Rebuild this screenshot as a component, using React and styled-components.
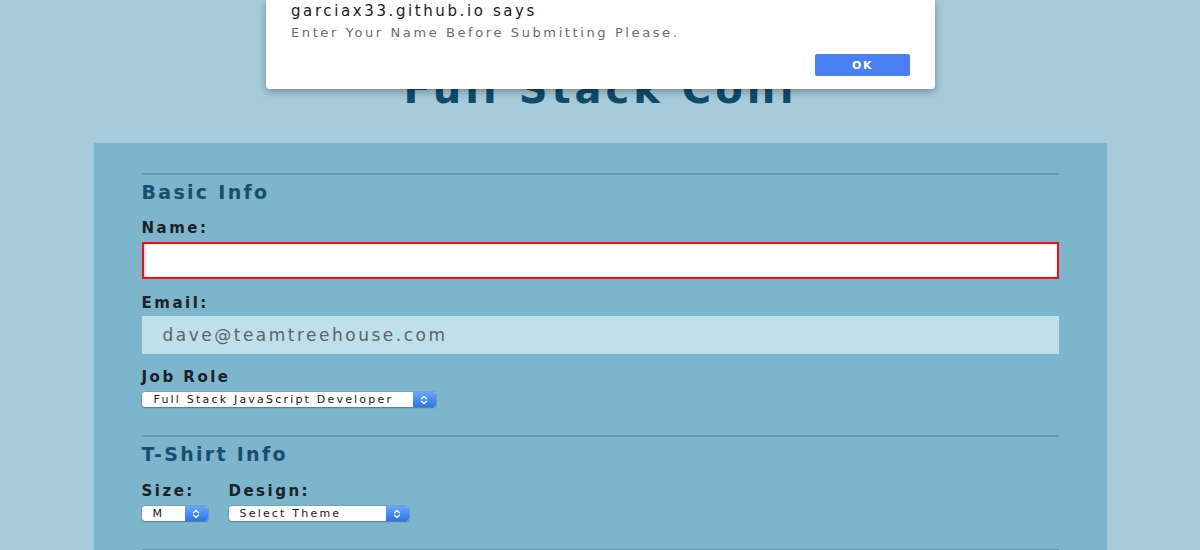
import React from "react";
import styled, { createGlobalStyle } from "styled-components";

const Global = createGlobalStyle`
  html, body { margin: 0; padding: 0; overflow: hidden; }
  body {
    background: #a7cbdb;
    font-family: "DejaVu Sans", "Liberation Sans", Arial, sans-serif;
  }
`;

const Page = styled.div`
  position: relative;
  width: 1200px;
  height: 550px;
  overflow: hidden;
`;

const Header = styled.header`
  padding-top: 65px;
  display: flex;
  justify-content: center;
`;

const Title = styled.h1`
  margin: 0;
  padding-left: 4px;
  font-size: 40px;
  line-height: 48px;
  font-weight: bold;
  letter-spacing: 4px;
  color: #0f4d6b;
`;

const Panel = styled.form`
  width: 1013px;
  margin: 30px auto 0;
  box-sizing: border-box;
  padding: 30px 48px 40px;
  background: #7cb5cc;
`;

const Section = styled.section`
  border-top: 2px solid #5e9ab4;
  padding-top: 5px;
  padding-bottom: ${(p) => p.$pb || 0}px;
  min-height: ${(p) => p.$minH || 0}px;
  display: flex;
  flex-direction: column;
`;

const SectionTitle = styled.h2`
  margin: 0 0 ${(p) => p.$mb ?? 15}px;
  font-size: 19px;
  line-height: 24px;
  font-weight: bold;
  letter-spacing: 2.3px;
  color: #17506e;
`;

const Label = styled.label`
  display: block;
  font-size: 15px;
  line-height: 18px;
  font-weight: bold;
  letter-spacing: 2.5px;
  color: #1c2225;
  margin-top: ${(p) => p.$mt || 0}px;
`;

const TextField = styled.div`
  box-sizing: border-box;
  height: ${(p) => p.$h}px;
  margin-top: ${(p) => p.$mt}px;
  display: flex;
  align-items: center;
  padding-left: 21px;
  font-size: 17px;
  letter-spacing: 2.5px;
  color: #636363;
  background: ${(p) => (p.$error ? "#ffffff" : "#bde0ea")};
  border: ${(p) => (p.$error ? "2px solid #ff0a0a" : "none")};
  box-shadow: ${(p) => (p.$error ? "inset 2px 0 2px rgba(0,0,0,0.12)" : "none")};
`;

const SelectBox = styled.div`
  width: ${(p) => p.$w}px;
  height: 15px;
  margin-top: ${(p) => p.$mt || 0}px;
  display: flex;
  border-radius: 3px;
  background: #ffffff;
  box-shadow: 0 0 0 0.5px rgba(0, 0, 0, 0.18), 0 1px 1.5px rgba(0, 0, 0, 0.25);
  overflow: hidden;
`;

const SelectText = styled.span`
  flex: 1;
  padding-left: ${(p) => p.$pl || 11}px;
  font-size: 11px;
  line-height: 15px;
  letter-spacing: 2.2px;
  color: #1a1a1a;
  white-space: nowrap;
`;

const Stepper = styled.span`
  width: 23px;
  display: flex;
  align-items: center;
  justify-content: center;
  background: linear-gradient(#6aa6fa, #2b72f0);
`;

const Row = styled.div`
  display: flex;
  gap: 21px;
  margin-top: 16px;
`;

const Col = styled.div`
  display: flex;
  flex-direction: column;
`;

const Dialog = styled.div`
  position: absolute;
  left: 266px;
  top: 0;
  width: 669px;
  height: 89px;
  box-sizing: border-box;
  padding: 2px 25px 0;
  background: #ffffff;
  border-radius: 0 0 3px 3px;
  box-shadow: 0 3px 9px rgba(0, 0, 0, 0.3), 0 0 1px rgba(0, 0, 0, 0.3);
  display: flex;
  flex-direction: column;
`;

const DialogTitle = styled.div`
  font-size: 15px;
  line-height: 18px;
  letter-spacing: 2.6px;
  color: #1a1a1a;
`;

const DialogMessage = styled.div`
  margin-top: 5px;
  font-size: 13px;
  line-height: 16px;
  letter-spacing: 2.6px;
  color: #6b6b6b;
`;

const DialogActions = styled.div`
  margin-top: 13px;
  display: flex;
  justify-content: flex-end;
`;

const OkButton = styled.button`
  width: 95px;
  height: 22px;
  border: none;
  border-radius: 2px;
  background: #4a80f5;
  color: #ffffff;
  font-family: inherit;
  font-size: 11px;
  font-weight: bold;
  letter-spacing: 1.5px;
  padding: 0;
`;

const Chevrons = () => (
  <svg width="8" height="10" viewBox="0 0 8 10">
    <path d="M1.5 3.8 L4 1.5 L6.5 3.8 M1.5 6.2 L4 8.5 L6.5 6.2" fill="none" stroke="#ffffff" strokeWidth="1.3" strokeLinecap="round" strokeLinejoin="round" />
  </svg>
);

const Select = ({ w, mt, pl, children }) => (
  <SelectBox $w={w} $mt={mt}>
    <SelectText $pl={pl}>{children}</SelectText>
    <Stepper>
      <Chevrons />
    </Stepper>
  </SelectBox>
);

export default function App() {
  return (
    <Page>
      <Global />
      <Header>
        <Title>Full Stack Conf</Title>
      </Header>
      <Panel>
        <Section $pb={28}>
          <SectionTitle>Basic Info</SectionTitle>
          <Label>Name:</Label>
          <TextField $error $h={37} $mt={5} />
          <Label $mt={15}>Email:</Label>
          <TextField $h={38} $mt={4}>dave@teamtreehouse.com</TextField>
          <Label $mt={14}>Job Role</Label>
          <Select w={294} mt={6} pl={12}>Full Stack JavaScript Developer</Select>
        </Section>
        <Section $pb={28}>
          <SectionTitle $mb={0}>T-Shirt Info</SectionTitle>
          <Row>
            <Col>
              <Label>Size:</Label>
              <Select w={66} mt={6} pl={11}>M</Select>
            </Col>
            <Col>
              <Label>Design:</Label>
              <Select w={180} mt={6} pl={11}>Select Theme</Select>
            </Col>
          </Row>
        </Section>
        <Section $minH={40} />
      </Panel>
      <Dialog role="alertdialog">
        <DialogTitle>garciax33.github.io says</DialogTitle>
        <DialogMessage>Enter Your Name Before Submitting Please.</DialogMessage>
        <DialogActions>
          <OkButton type="button">OK</OkButton>
        </DialogActions>
      </Dialog>
    </Page>
  );
}
